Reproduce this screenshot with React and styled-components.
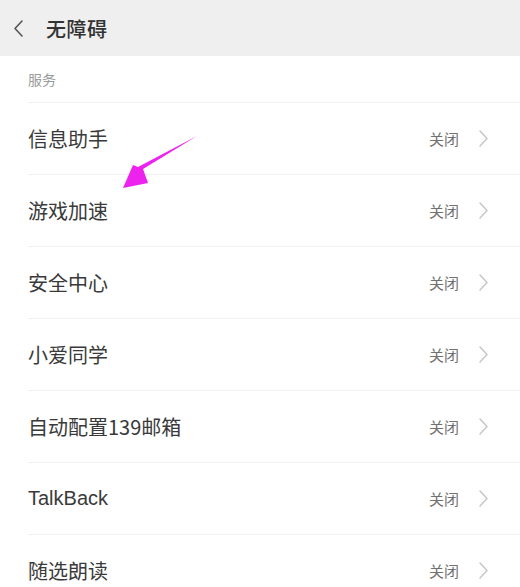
import styled, { createGlobalStyle } from "styled-components";

const GlobalStyle = createGlobalStyle`
  html, body {
    margin: 0;
    padding: 0;
    background: #ffffff;
    font-family: "Noto Sans CJK SC", "Noto Sans", sans-serif;
  }
`;

const Screen = styled.div`
  position: relative;
  width: 520px;
  height: 587px;
  overflow: hidden;
  background: #ffffff;
`;

const Header = styled.div`
  display: flex;
  align-items: center;
  height: 56px;
  padding-left: 13px;
  background: #efefef;
  gap: 22px;
`;

const Title = styled.h1`
  margin: 0;
  font-size: 20px;
  font-weight: 500;
  color: #333333;
  letter-spacing: 0.5px;
`;

const SectionLabel = styled.div`
  height: 46px;
  display: flex;
  align-items: center;
  padding-left: 28px;
  font-size: 14px;
  color: #9a9a9a;
`;

const List = styled.div`
  margin-left: 28px;
`;

const Row = styled.div`
  display: flex;
  align-items: center;
  height: 71px;
  border-top: 1px solid #f0f0f0;
  padding-right: 31px;
`;

const Label = styled.div`
  flex: 1;
  color: #3a3a3a;
  font-family: ${(p) => (p.$latin ? '"Liberation Sans", Arial' : '"Noto Sans CJK SC"')}, sans-serif;
  font-size: 20px;
`;

const Status = styled.span`
  font-size: 15px;
  color: #707070;
  margin-right: 19px;
`;

const Arrow = styled.svg`
  position: absolute;
  left: 0;
  top: 0;
  pointer-events: none;
`;

const items = [
  "信息助手",
  "游戏加速",
  "安全中心",
  "小爱同学",
  "自动配置139邮箱",
  "TalkBack",
  "随选朗读",
];

function Chevron({ dir = "right", color }) {
  const d = dir === "right" ? "M2 2 L9 9.5 L2 17" : "M9 2 L2 9.5 L9 17";
  return (
    <svg width="11" height="19" viewBox="0 0 11 19">
      <path d={d} fill="none" stroke={color} strokeWidth="1.6" strokeLinecap="round" strokeLinejoin="round" />
    </svg>
  );
}

export default function App() {
  return (
    <>
      <GlobalStyle />
      <Screen>
        <Header>
          <Chevron dir="left" color="#555" />
          <Title>无障碍</Title>
        </Header>
        <SectionLabel>服务</SectionLabel>
        <List>
          {items.map((name) => (
            <Row key={name}>
              <Label $latin={name === "TalkBack"}>{name}</Label>
              <Status>关闭</Status>
              <Chevron color="#c8c8c8" />
            </Row>
          ))}
        </List>
        <Arrow width="520" height="587" viewBox="0 0 520 587">
          <path
            d="M197 136 L143 169 L148 183 L123 188 L133 165 L138 167 Z"
            fill="#ee22ee"
          />
        </Arrow>
      </Screen>
    </>
  );
}
